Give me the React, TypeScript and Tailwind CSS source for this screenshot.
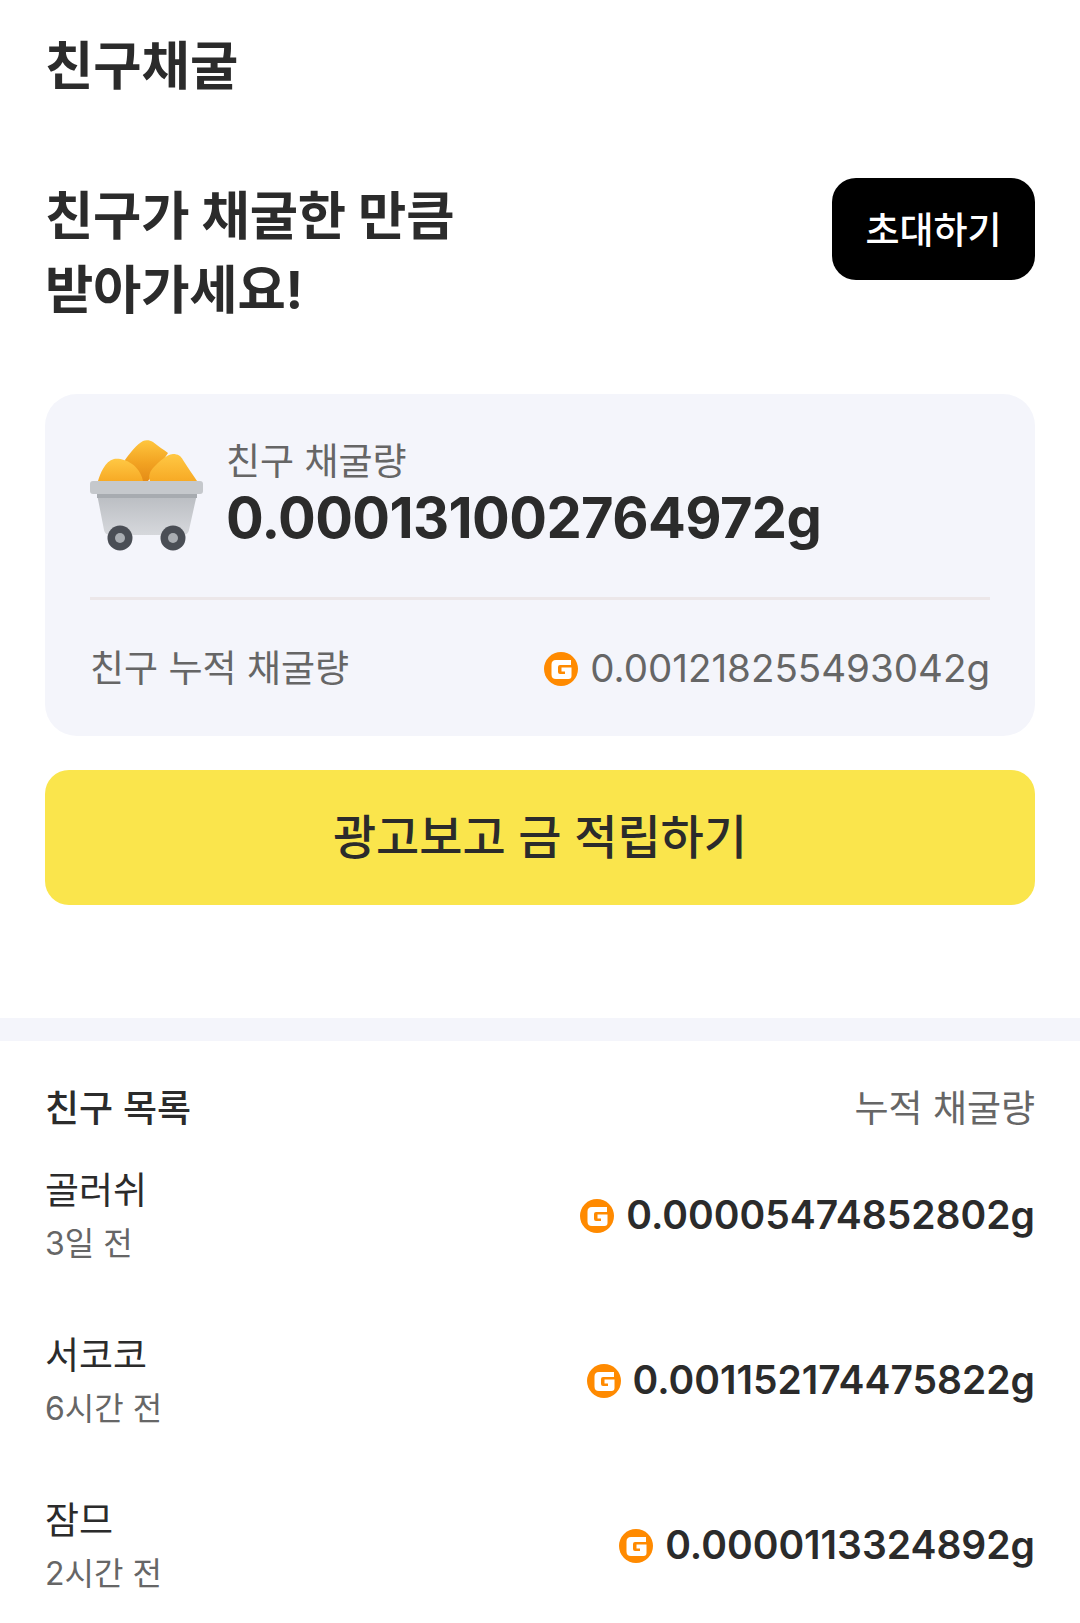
const FONT = "font-['Inter','Noto_Sans_CJK_KR',sans-serif]"

const friends = [
  { name: '골러쉬', time: '3일 전', amount: '0.00005474852802g' },
  { name: '서코코', time: '6시간 전', amount: '0.001152174475822g' },
  { name: '잠므', time: '2시간 전', amount: '0.0000113324892g' },
]

function GoldIcon() {
  return (
    <svg width="34" height="34" viewBox="0 0 34 34" className="shrink-0">
      <circle cx="17" cy="17" r="17" fill="#ff8a00" />
      <path
        d="M12 8H27V13H16Q14 13 14 15V20Q14 22 16 22H21V19.5H17.5V15.5H27.5V24Q27.5 27 24.5 27H12Q7.5 27 7.5 22.5V12.5Q7.5 8 12 8Z"
        fill="#fff"
      />
    </svg>
  )
}

function MineCart() {
  return (
    <svg width="113" height="111" viewBox="0 0 113 111" className="shrink-0">
      <defs>
        <linearGradient id="gold" x1="0" y1="0" x2="0" y2="1">
          <stop offset="0" stopColor="#ffc844" />
          <stop offset="1" stopColor="#f7aa25" />
        </linearGradient>
        <linearGradient id="goldBack" x1="0" y1="0" x2="0" y2="1">
          <stop offset="0" stopColor="#ffc63e" />
          <stop offset="0.55" stopColor="#f2a322" />
          <stop offset="1" stopColor="#e58c17" />
        </linearGradient>
        <linearGradient id="cart" x1="0" y1="0" x2="0" y2="1">
          <stop offset="0" stopColor="#b9bcc1" />
          <stop offset="1" stopColor="#d6d8dc" />
        </linearGradient>
      </defs>
      {/* gold pile */}
      <path d="M35 20C40 13 47 4 53 1C56 -0.5 60 0 63 2C68 6 74 10 78 13L70 25L58 41H40Z" fill="url(#goldBack)" />
      <path d="M8 41C10 34 15 21 24 19C27 18.5 31 19 34 20C44 23 51 31 53 41Z" fill="url(#gold)" />
      <path d="M60 41C58 36 60 31 64 27C70 21 76 15 83 14C88 14 91 16 93 20C98 28 103 35 107 41Z" fill="url(#gold)" />
      {/* body */}
      <path d="M7 54L14 90Q15 95 20 95H93Q98 95 99 90L107 54Z" fill="url(#cart)" />
      <rect x="7" y="54" width="100" height="4" fill="#a7abb0" />
      <rect x="0" y="41" width="113" height="13" rx="3" fill="#c5c8cc" />
      {/* wheels */}
      <circle cx="30" cy="98" r="12.5" fill="#4a4e55" />
      <circle cx="30" cy="98" r="5" fill="#a9adb2" />
      <circle cx="83" cy="98" r="12.5" fill="#4a4e55" />
      <circle cx="83" cy="98" r="5" fill="#a9adb2" />
    </svg>
  )
}

export default function App() {
  return (
    <div className={`w-[1080px] h-[1623px] overflow-hidden bg-white text-[#2b2b2b] ${FONT}`}>
      {/* Header */}
      <h1 className="px-[45px] pt-[31px] text-[52.5px] leading-[70px] font-bold">친구채굴</h1>

      {/* Invite */}
      <div className="mt-[77px] px-[45px] flex justify-between items-start">
        <p className="pt-[1px] text-[52.5px] leading-[74px] font-bold tracking-[-0.2px]">
          친구가 채굴한 만큼
          <br />
          받아가세요!
        </p>
        <button className="w-[203px] h-[102px] pt-[3px] rounded-[24px] bg-black text-white text-[37px] font-medium">
          초대하기
        </button>
      </div>

      {/* Summary card */}
      <div className="mx-[45px] mt-[67px] h-[342px] rounded-[32px] bg-[#f4f5fb] px-[45px]">
        <div className="flex items-center h-[206px] border-b-[3px] border-[#ece7e9]">
          <MineCart />
          <div className="ml-[23px] pb-[3px]">
            <div className="mb-[3px] text-[37px] leading-[44px] text-[#666666]">친구 채굴량</div>
            <div className="text-[56px] leading-[62px] font-bold tracking-[-0.6px]">0.000131002764972g</div>
          </div>
        </div>
        <div className="flex justify-between items-center h-[134px] pt-[4px]">
          <span className="text-[37px] text-[#666666]">친구 누적 채굴량</span>
          <span className="flex items-center gap-[12px] text-[38.5px] text-[#666666]">
            <GoldIcon />
            0.001218255493042g
          </span>
        </div>
      </div>

      {/* Ad button */}
      <button className="block mx-[45px] mt-[34px] w-[990px] h-[135px] rounded-[24px] bg-[#fae54c] text-[47px] font-medium">
        광고보고 금 적립하기
      </button>

      <div className="mt-[113px] h-[23px] bg-[#f4f5fb]" />

      {/* Friend list */}
      <div className="px-[45px]">
        <div className="flex justify-between items-center mt-[43px] h-[49px]">
          <span className="text-[37px] font-medium">친구 목록</span>
          <span className="text-[37px] text-[#666666]">누적 채굴량</span>
        </div>
        {friends.map((f) => (
          <div key={f.name} className="flex justify-between items-center h-[165px]">
            <div className="pt-[2px]">
              <div className="text-[37px] leading-[54px]">{f.name}</div>
              <div className="mt-[1px] text-[32px] leading-[50px] text-[#666666]">{f.time}</div>
            </div>
            <span className="flex items-center gap-[12px] text-[39px] font-semibold">
              <GoldIcon />
              {f.amount}
            </span>
          </div>
        ))}
      </div>
    </div>
  )
}
